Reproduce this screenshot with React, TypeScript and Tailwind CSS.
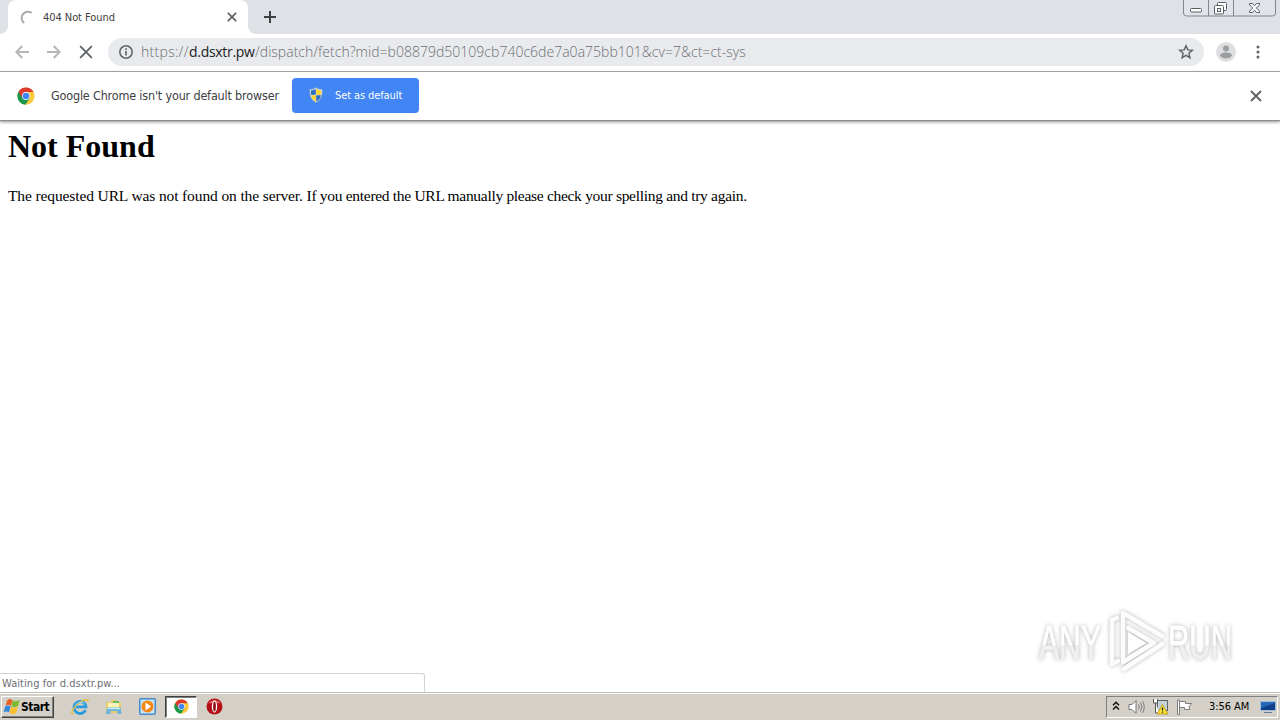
import type { ReactNode } from 'react'

const TAHOMA = "font-['DejaVu_Sans_Condensed','DejaVu_Sans',sans-serif]"

function ChromeLogo({ size }: { size: number }) {
  return (
    <svg width={size} height={size} viewBox="0 0 48 48" className="shrink-0">
      <circle cx="24" cy="24" r="23" fill="#fbc93a" />
      <path d="M24 24 4.100 12.500A23 23 0 0 0 22 47L34 29.800Z" fill="#1a9850" />
      <path d="M4.100 12.500A23 23 0 0 1 44 13.500H24L14.500 30Z" fill="#dd3b2e" />
      <circle cx="24" cy="24" r="10.500" fill="#fff" />
      <circle cx="24" cy="24" r="8.800" fill="#4285f4" />
    </svg>
  )
}

function Shield() {
  return (
    <svg width="14" height="16" viewBox="0 0 14 16" className="mb-0.5 shrink-0">
      <path d="M7 .5C5 2 3 2.400.8 2.400.5 8 1.800 12.800 7 15.500 12.200 12.800 13.500 8 13.200 2.400 11 2.400 9 2 7 .5Z" fill="#d9e3ea" stroke="#8aa0b4" strokeWidth=".6" />
      <path d="M6.800 2v5.800H2C1.900 6.200 1.900 5 2 3.500 4 3.400 5.500 2.900 6.800 2Z" fill="#2b6cc4" />
      <path d="M7.200 2v5.800H12c.1-1.600.1-2.800 0-4.300-2-.1-3.500-.6-4.800-1.500Z" fill="#fcd42c" />
      <path d="M6.800 8.200H2.100c.4 2.900 2 4.900 4.700 6.200Z" fill="#fcd42c" />
      <path d="M7.200 8.200h4.700c-.4 2.900-2 4.900-4.700 6.200Z" fill="#2b6cc4" />
    </svg>
  )
}

function Cross({ size, width, color }: { size: number; width: number; color: string }) {
  return (
    <svg width={size} height={size} viewBox="0 0 12 12" className="shrink-0">
      <path d="m1 1 10 10M11 1 1 11" stroke={color} strokeWidth={width} fill="none" />
    </svg>
  )
}

function WindowControls() {
  return (
    <svg width="93" height="17" viewBox="0 0 93 17" className="absolute top-0 left-[1183px]">
      <path d="M.5-1v14a3 3 0 0 0 3 3h86a3 3 0 0 0 3-3V-1" fill="#e0e3e9" stroke="#83868c" />
      <path d="M25.500 0v16M50.500 0v16" stroke="#83868c" />
      <rect x="7.500" y="8.500" width="11" height="3.500" rx="1" fill="#fff" stroke="#5b5e64" />
      <rect x="34.500" y="2.500" width="9" height="8" rx="1" fill="#fff" stroke="#5b5e64" />
      <rect x="31.500" y="5.500" width="9" height="8.500" rx="1" fill="#fff" stroke="#5b5e64" />
      <rect x="34.500" y="8.500" width="3" height="3" fill="#fff" stroke="#5b5e64" />
      <path d="M66.500 3.500h3l2 2.300 2-2.300h3v1.300L73.400 8l3.100 3.200v1.300h-3l-2-2.300-2 2.300h-3v-1.300L69.600 8l-3.100-3.200Z" fill="#fff" stroke="#5b5e64" />
    </svg>
  )
}

function TabStrip() {
  return (
    <div className="relative flex h-[34px] bg-[#dee1e6]">
      <div className="flex w-2 items-end bg-white">
        <div className="h-full w-2 rounded-br-lg bg-[#dee1e6]" />
      </div>
      <div className="flex w-60 items-center rounded-t-lg bg-white pl-3">
        <svg width="15" height="15" viewBox="0 0 15 15" className="shrink-0">
          <path d="M11.600 2.900A6 6 0 1 0 4.200 12.900" fill="none" stroke="#aaa" strokeWidth="2" />
        </svg>
        <span className={`${TAHOMA} mt-0.5 ml-2 w-[184px] text-[11px] tracking-[-0.06px] whitespace-nowrap text-[#3c4043]`}>404 Not Found</span>
        <Cross size={10} width={2.1} color="#5f6368" />
      </div>
      <div className="w-2 bg-white">
        <div className="h-full w-2 rounded-bl-lg bg-[#dee1e6]" />
      </div>
      <svg width="12" height="12" viewBox="0 0 12 12" className="mt-[11px] ml-2">
        <path d="M6 0v12M0 6h12" stroke="#3c4043" strokeWidth="2" />
      </svg>
      <WindowControls />
    </div>
  )
}

function Toolbar() {
  return (
    <div className="flex h-[38px] items-center border-b border-[#a6a6a6] bg-white pb-px pl-[15px]">
      <svg width="14" height="14" viewBox="0 0 14 14">
        <path d="M14 7H1.500M7.300 1 1.300 7l6 6" fill="none" stroke="#b4b6b8" strokeWidth="2" />
      </svg>
      <svg width="14" height="14" viewBox="0 0 14 14" className="ml-[18px]">
        <path d="M0 7h12.500M6.700 1l6 6-6 6" fill="none" stroke="#b4b6b8" strokeWidth="2" />
      </svg>
      <div className="ml-[18px] flex w-[29px]">
        <Cross size={14} width={1.6} color="#5f6368" />
      </div>
      <div className="flex h-7 w-[1096px] items-center rounded-full bg-[#e8eaed] pr-[10px] pl-[11px]">
        <svg width="14" height="14" viewBox="0 0 14 14" className="shrink-0">
          <circle cx="7" cy="7" r="6.200" fill="none" stroke="#5f6368" strokeWidth="1.500" />
          <path d="M7 6v4.500M7 3.300v1.600" stroke="#5f6368" strokeWidth="1.600" />
        </svg>
        <div className="mb-0.5 ml-2 flex flex-1 font-['Open_Sans','Noto_Sans',sans-serif] text-[14px] font-light whitespace-nowrap text-[#6c7074]">
          <span className="w-[48px] tracking-[0.3px]">https://</span>
          <span className="w-[66px] font-normal tracking-[-0.3px] text-[#202124]">d.dsxtr.pw</span>
          <span className="tracking-[0.02px]">/dispatch/fetch?mid=b08879d50109cb740c6de7a0a75bb101&amp;cv=7&amp;ct=ct-sys</span>
        </div>
        <svg width="16" height="16" viewBox="0 0 16 16" className="shrink-0">
          <path d="m8 1.800 1.800 4.100 4.500.4-3.400 3 1 4.400L8 11.400l-3.900 2.300 1-4.400-3.400-3 4.500-.4Z" fill="none" stroke="#5f6368" strokeWidth="1.500" />
        </svg>
      </div>
      <svg width="20" height="20" viewBox="0 0 20 20" className="ml-3">
        <circle cx="10" cy="10" r="10" fill="#dedfe1" />
        <circle cx="10" cy="6.500" r="3" fill="#9b9da0" />
        <path d="M4 13.500c0-4 12-4 12 0-1 1.800-3 3-6 3s-5-1.200-6-3Z" fill="#9b9da0" />
      </svg>
      <svg width="4" height="14" viewBox="0 0 4 14" className="ml-5">
        <circle cx="2" cy="2" r="1.500" fill="#5f6368" />
        <circle cx="2" cy="7" r="1.500" fill="#5f6368" />
        <circle cx="2" cy="12" r="1.500" fill="#5f6368" />
      </svg>
    </div>
  )
}

function InfoBar() {
  return (
    <div className={`${TAHOMA} flex h-[49px] items-center border-b border-[#8c8c8c] bg-white pb-px pl-[17px] shadow-[0_1px_3px_#8c8c8c]`}>
      <ChromeLogo size={18} />
      <span className="mt-0.5 ml-4 w-[241px] text-[12.5px] tracking-[-0.18px] whitespace-nowrap text-[#3c4043]">Google Chrome isn't your default browser</span>
      <button className="flex h-[35px] w-[127px] items-center rounded bg-[#4285f4] pl-[17px] text-[11px] whitespace-nowrap text-white">
        <Shield />
        <span className="mt-0.5 ml-3 tracking-[-0.1px]">Set as default</span>
      </button>
      <div className="mr-[18px] ml-auto">
        <Cross size={12} width={1.9} color="#5f6368" />
      </div>
    </div>
  )
}

function Watermark() {
  return (
    <svg width="248" height="76" viewBox="0 0 248 76" className="absolute top-[602px] left-[1030px] [filter:drop-shadow(0_0_2px_#b5b5b5)]">
      <defs>
        <linearGradient id="fade" x2="0" y2="1">
          <stop offset=".55" stopColor="#fff" />
          <stop offset=".55" stopColor="#f0f0f0" />
        </linearGradient>
      </defs>
      <g fill="url(#fade)" stroke="url(#fade)" strokeWidth=".8" fontFamily="'Liberation Sans Narrow','Liberation Sans',sans-serif" fontSize="48">
        <text x="9" y="57" textLength="62" lengthAdjust="spacingAndGlyphs">ANY</text>
        <text x="138" y="57" textLength="64" lengthAdjust="spacingAndGlyphs">RUN</text>
      </g>
      <g fill="none" stroke="#fcfcfc" strokeWidth="4.500" strokeLinejoin="round" strokeLinecap="round">
        <path d="M93 58V11l39 23M98 26l26 15-31 19" />
        <path d="M87 16l-5 2v44l6-3M94 67l38-25" />
      </g>
      <path d="M98 30l18 11-18 11Z" fill="#fff" />
    </svg>
  )
}

function TaskIcon({ children }: { children: ReactNode }) {
  return <div className="flex h-[22px] w-[34px] items-center justify-center">{children}</div>
}

function Taskbar() {
  return (
    <div className={`${TAHOMA} flex h-7 items-center border-t border-[#bebcb8] bg-[#d4d0c8] pl-px text-[11px] text-black shadow-[inset_0_1px_#fff]`}>
      <button className="flex h-[22px] w-[53px] items-center border border-t-white border-r-[#404040] border-b-[#404040] border-l-white pl-0.5 shadow-[inset_-1px_-1px_#808080]">
        <svg width="17" height="17" viewBox="0 0 16 16" className="shrink-0">
          <path d="M3 2c2-1.500 3.500-1 5 0L6.500 7.300C5 6.300 3.500 6 1.500 7Z" fill="#eb6024" />
          <path d="M8.300 2.200c2 1.200 4 1 6.500-.3l-1.500 5.600c-2 1.300-4 1.300-6.500.2Z" fill="#7dbb33" />
          <path d="M1.200 7.700c2-1.200 3.500-.8 5 .2L4.700 13.500c-1.500-1-3-1.300-5-.2Z" fill="#3288d8" />
          <path d="M6.600 8.300c2 1.200 4 1 6.400-.2l-1.500 5.900c-2 1.300-4 1.200-6.400.1Z" fill="#fbc02d" />
        </svg>
        <span className="text-[12px] font-bold tracking-[-0.5px]">Start</span>
      </button>
      <div className="ml-[9px] flex items-center">
        <TaskIcon>
          <svg width="18" height="18" viewBox="0 0 18 18">
            <path d="M14.500 12A6 6 0 1 1 15 8.800H5" fill="none" stroke="#2b9be0" strokeWidth="2.800" />
            <path d="M2.500 15.500C-1 17 1 10 8 5c5-3.500 10-5 9-1" fill="none" stroke="#e6bc3b" strokeWidth="1.400" />
            <path d="M4.500 7.500C6 4 11 3 13.500 6" fill="none" stroke="#90d4f6" />
          </svg>
        </TaskIcon>
        <div className="-ml-px">
          <TaskIcon>
            <svg width="17" height="16" viewBox="0 0 17 16">
              <path d="M1 3h5l1-2h5v2h4v11H1Z" fill="#e9ca6c" />
              <path d="M3 4h11v7H3Z" fill="#fff3b5" />
              <path d="M8 2h6v2H8Z" fill="#69b96c" />
              <path d="M2 8.500h13.500L16.500 15h-4v-3h-7v3H1Z" fill="#67b5df" />
              <path d="M2.500 9h12.500v1.200H2.500Z" fill="#c7e9f8" />
            </svg>
          </TaskIcon>
        </div>
        <TaskIcon>
          <svg width="17" height="17" viewBox="0 0 17 17">
            <rect x=".75" y=".75" width="15.500" height="15.500" rx="1" fill="#c8e4f7" stroke="#4689c8" strokeWidth="1.500" />
            <circle cx="8.500" cy="8.500" r="6" fill="#f58813" />
            <path d="m6.500 4.500 5.500 4-5.500 4Z" fill="#fff" />
          </svg>
        </TaskIcon>
        <div className="ml-px flex h-[22px] w-8 items-center justify-center border border-t-[#404040] border-r-white border-b-white border-l-[#404040] bg-white shadow-[inset_1px_1px_#808080]">
          <ChromeLogo size={15} />
        </div>
        <TaskIcon>
          <svg width="17" height="17" viewBox="0 0 16 16">
            <circle cx="8" cy="8" r="7.500" fill="#b30f16" />
            <path d="M2 5a7 6 0 0 1 12 0Z" fill="#de5a5a" />
            <ellipse cx="8" cy="8" rx="2.500" ry="5.800" fill="#fff" />
            <ellipse cx="8" cy="8" rx="1.300" ry="4.800" fill="#911017" />
          </svg>
        </TaskIcon>
      </div>
      <div className="mr-0.5 ml-auto flex h-[22px] w-[172px] items-center border border-t-[#808080] border-r-white border-b-white border-l-[#808080] pl-[5px]">
        <svg width="8" height="10" viewBox="0 0 8 10" className="mb-0.5">
          <path d="m1 4.200 3-3 3 3M1 8.500l3-3 3 3" fill="none" stroke="#111" strokeWidth="1.500" />
        </svg>
        <svg width="17" height="16" viewBox="0 0 17 16" className="ml-2">
          <path d="M1 5.500h3L8 1.500v13l-4-4H1Z" fill="#fff" stroke="#74777a" />
          <path d="M10.500 5.500q1.500 2.500 0 5M12.500 3.500q3 4.500 0 9M14.500 2q3.500 6 0 12" fill="none" stroke="#808285" />
        </svg>
        <svg width="17" height="17" viewBox="0 0 17 17" className="ml-[7px]">
          <rect x="5.500" y="2.500" width="10" height="10" fill="#c6d2d9" stroke="#606468" />
          <path d="M1.500 1v4h4V1M3.500 5v10h4" fill="#fff" stroke="#555" />
          <path d="m10.500 6.500 5.500 9.500H5Z" fill="#fce334" stroke="#b69415" strokeWidth=".8" />
          <path d="M10.500 9.500v3M10.500 13.500v1.300" stroke="#222" strokeWidth="1.300" />
        </svg>
        <svg width="17" height="16" viewBox="0 0 17 16" className="ml-[7px]">
          <path d="M1.500 1v14.500h2V1ZM3.500 2.500h6v2h6l-2.500 3 1 3H8.500v-2h-5Z" fill="#fff" stroke="#7b7d7f" />
        </svg>
        <span className="mt-0.5 ml-4 w-[51px] whitespace-nowrap tracking-[-0.05px]">3:56 AM</span>
        <svg width="16" height="14" viewBox="0 0 16 14" className="shrink-0">
          <rect x=".5" y="1.500" width="15" height="9" fill="#2669b8" stroke="#a0bcdb" />
          <path d="M1 8 15 3v7H1Z" fill="#123f89" />
          <path d="M4 12.500h8" stroke="#657b91" />
        </svg>
      </div>
    </div>
  )
}

export default function App() {
  return (
    <div className="relative flex h-[720px] w-[1280px] flex-col overflow-hidden bg-white">
      <TabStrip />
      <Toolbar />
      <InfoBar />
      <main className="flex-1 px-2 pt-[7px] font-['Liberation_Serif',serif] text-black">
        <h1 className="text-[32px] leading-[37px] font-bold">Not Found</h1>
        <p className="mt-[22px] text-[15.5px] leading-[18px] tracking-[-0.23px] whitespace-nowrap">
          <span className="tracking-[-0.12px]">The requested URL was not found on the server. </span>
          <span className="tracking-[-0.3px]">If you entered the URL manually please check your spelling and try again.</span>
        </p>
      </main>
      <div className={`${TAHOMA} flex h-[19px] w-[425px] items-center rounded-tr-[3px] border-t border-r border-[#d4d4d4] pt-0.5 pl-0.5 text-[11px] tracking-[0.06px] text-[#6b6e72]`}>
        Waiting for d.dsxtr.pw...
      </div>
      <Watermark />
      <Taskbar />
    </div>
  )
}
